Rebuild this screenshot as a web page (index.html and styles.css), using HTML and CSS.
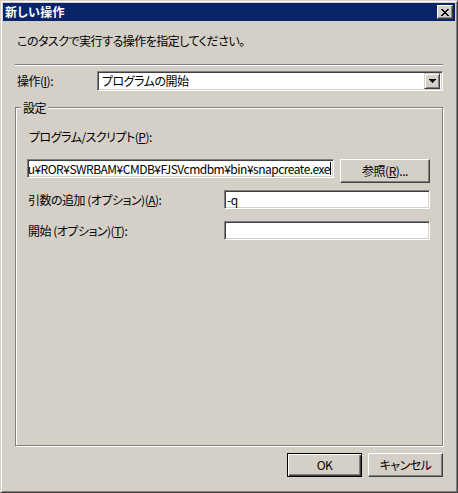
FILE: index.html
```html
<!DOCTYPE html>
<html lang="ja">
<head>
<meta charset="utf-8">
<title>新しい操作</title>
<link rel="stylesheet" href="styles.css">
</head>
<body>
<div class="window">
  <div class="titlebar">
    <span class="title">新しい操作</span>
    <span class="close-btn"><svg width="8" height="7" viewBox="0 0 8 7"><path fill="#000" d="M0 0h2v1H0zM6 0h2v1H6zM1 1h2v1H1zM5 1h2v1H5zM2 2h4v1H2zM3 3h2v1H3zM2 4h4v1H2zM1 5h2v1H1zM5 5h2v1H5zM0 6h2v1H0zM6 6h2v1H6z"/></svg></span>
  </div>
  <div class="body">
    <p class="intro">このタスクで実行する操作を指定してください。</p>
    <div class="separator"></div>
    <div class="action-row">
      <span class="action-label">操作(<u>I</u>):</span>
      <div class="combo">
        <span class="combo-text">プログラムの開始</span>
        <span class="combo-btn"><svg width="7" height="4" viewBox="0 0 7 4"><path fill="#000" d="M0 0h7v1H0zM1 1h5v1H1zM2 2h3v1H2zM3 3h1v1H3z"/></svg></span>
      </div>
    </div>
    <div class="group">
      <span class="group-title">設定</span>
      <div class="field-label">プログラム/スクリプト(<u>P</u>):</div>
      <div class="path-row">
        <div class="textbox path-box"><span class="path-text">C:¥Program Files¥Fujitsu¥ROR¥SWRBAM¥CMDB¥FJSVcmdbm¥bin¥snapcreate.exe</span><span class="caret"></span></div>
        <button class="btn browse">参照(<u>R</u>)...</button>
      </div>
      <div class="opt-row args-row">
        <span class="opt-label">引数の追加 (オプション)(<u>A</u>):</span>
        <div class="textbox">-q</div>
      </div>
      <div class="opt-row start-row">
        <span class="opt-label">開始 (オプション)(<u>T</u>):</span>
        <div class="textbox"></div>
      </div>
    </div>
    <div class="footer">
      <button class="btn default">OK</button>
      <button class="btn">キャンセル</button>
    </div>
  </div>
</div>
</body>
</html>
```
FILE: styles.css
```css
* { box-sizing: border-box; }
html, body { margin: 0; padding: 0; }
body {
  width: 458px;
  height: 493px;
  background: #d4d0c8;
  color: #000;
  font-family: "Noto Sans CJK JP", "Liberation Sans", sans-serif;
  font-size: 12px;
  font-feature-settings: "palt";
  letter-spacing: -0.5px;
  overflow: hidden;
}
u { text-decoration: underline; text-underline-offset: 1px; }

.window {
  width: 458px;
  height: 493px;
  display: flex;
  flex-direction: column;
  padding: 2px;
  background: #d4d0c8;
  border: 1px solid;
  border-color: #d4d0c8 #404040 #404040 #d4d0c8;
  box-shadow: inset 1px 1px 0 #fff, inset -1px -1px 0 #808080;
}

.titlebar {
  flex: none;
  height: 18px;
  background: #0a246a;
  display: flex;
  justify-content: space-between;
  align-items: flex-start;
}
.title {
  color: #fff;
  font-weight: bold;
  line-height: 18px;
  padding-left: 2px;
  letter-spacing: 0.3px;
}
.close-btn {
  width: 16px;
  height: 14px;
  margin: 2px 2px 0 0;
  background: #d4d0c8;
  border: 1px solid;
  border-color: #fff #404040 #404040 #fff;
  box-shadow: inset -1px -1px 0 #808080;
  display: flex;
  align-items: center;
  justify-content: center;
}
.close-btn svg { display: block; }

.body {
  flex: 1;
  display: flex;
  flex-direction: column;
  padding: 0 12px 13px;
}
.intro {
  margin: 12px 0 0 2px;
  line-height: 16px;
}
.separator {
  margin-top: 15px;
  height: 2px;
  border-top: 1px solid #808080;
  border-bottom: 1px solid #fff;
}

.action-row {
  display: flex;
  align-items: center;
  margin-top: 5px;
  padding-left: 2px;
}
.action-label { width: 80px; line-height: 16px; }
.combo {
  flex: 1;
  height: 20px;
  display: flex;
  align-items: center;
  padding: 2px;
  background: #fff;
  border: 1px solid;
  border-color: #808080 #fff #fff #808080;
  box-shadow: inset 1px 1px 0 #404040, inset -1px -1px 0 #d4d0c8;
}
.combo-text { flex: 1; padding-left: 2px; line-height: 16px; }
.combo-btn {
  width: 16px;
  height: 16px;
  display: flex;
  align-items: center;
  justify-content: center;
  background: #d4d0c8;
  border: 1px solid;
  border-color: #d4d0c8 #404040 #404040 #d4d0c8;
  box-shadow: inset 1px 1px 0 #fff, inset -1px -1px 0 #808080;
}
.combo-btn svg { display: block; }

.group {
  flex: 1;
  margin-top: 16px;
  display: flex;
  flex-direction: column;
  align-items: stretch;
  padding: 0 12px 0 11px;
  border: 1px solid #808080;
  box-shadow: inset 1px 1px 0 #fff, 1px 1px 0 #fff;
}
.group-title {
  align-self: flex-start;
  margin: -8px 0 0 -6px;
  padding: 0 2px;
  line-height: 15px;
  background: #d4d0c8;
}
.field-label {
  margin-top: 14px;
  padding-left: 2px;
  line-height: 16px;
}

.textbox {
  height: 19px;
  background: #fff;
  border: 1px solid;
  border-color: #808080 #fff #fff #808080;
  box-shadow: inset 1px 1px 0 #404040, inset -1px -1px 0 #d4d0c8;
  padding: 0 2px;
  line-height: 17px;
  white-space: nowrap;
  overflow: hidden;
}
.path-row {
  display: flex;
  align-items: flex-start;
  gap: 6px;
  margin-top: 14px;
}
.path-box {
  width: 307px;
  flex: none;
  display: flex;
  justify-content: flex-end;
  align-items: center;
}
.path-text { flex: none; }
.caret {
  flex: none;
  width: 1px;
  height: 13px;
  background: #000;
}

.btn {
  font: inherit;
  letter-spacing: inherit;
  color: #000;
  padding: 0;
  background: #d4d0c8;
  border: 1px solid;
  border-color: #fff #404040 #404040 #fff;
  box-shadow: inset -1px -1px 0 #808080;
  height: 24px;
  line-height: 20px;
  text-align: center;
}
.btn.default {
  border-color: #000;
  box-shadow: inset 1px 1px 0 #fff, inset -1px -1px 0 #404040, inset -2px -2px 0 #808080;
}
.browse { width: 90px; flex: none; }

.opt-row {
  display: flex;
  align-items: center;
}
.args-row { margin-top: 7px; }
.start-row { margin-top: 12px; }
.opt-label {
  flex: 0 0 197px;
  padding-left: 1px;
  line-height: 16px;
}
.opt-row .textbox { flex: 1; }

.footer {
  flex: none;
  margin-top: 7px;
  display: flex;
  justify-content: flex-end;
  gap: 6px;
}
.footer .btn { width: 75px; }
```
